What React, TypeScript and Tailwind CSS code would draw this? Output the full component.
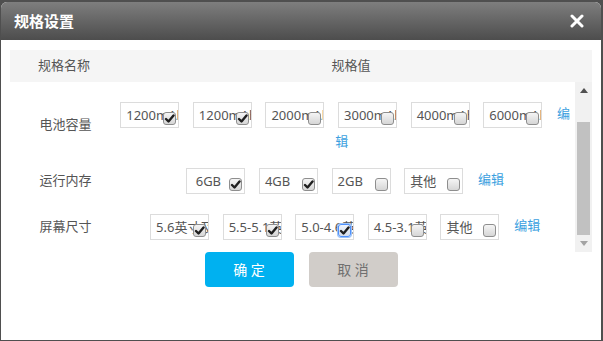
type Item = { text: string; checked: boolean; focused?: boolean };
type Row = { label: string; items: Item[] };

const rows: Row[] = [
  {
    label: "电池容量",
    items: [
      { text: "1200mAh", checked: true },
      { text: "1200mAh", checked: true },
      { text: "2000mAh", checked: false },
      { text: "3000mAh", checked: false },
      { text: "4000mAh", checked: false },
      { text: "6000mAh", checked: false },
    ],
  },
  {
    label: "运行内存",
    items: [
      { text: "\u00a06GB", checked: true },
      { text: "4GB", checked: true },
      { text: "2GB", checked: false },
      { text: "其他", checked: false },
    ],
  },
  {
    label: "屏幕尺寸",
    items: [
      { text: "5.6英寸及以上", checked: true },
      { text: "5.5-5.1英寸", checked: true },
      { text: "5.0-4.6英寸", checked: true, focused: true },
      { text: "4.5-3.1英寸", checked: false },
      { text: "其他", checked: false },
    ],
  },
];

function Checkbox({ checked, focused }: { checked: boolean; focused?: boolean }) {
  return (
    <span
      className={
        focused
          ? "absolute right-[2px] bottom-[2px] flex h-[13px] w-[13px] items-center justify-center rounded-[3px] border border-[#4d90fe] bg-gradient-to-b from-[#eef4fc] to-[#d4dce8] shadow-[0_0_0_1px_#9cc3f5]"
          : "absolute right-[2px] bottom-[2px] flex h-[13px] w-[13px] items-center justify-center rounded-[3px] border border-[#8e8e8e] bg-gradient-to-b from-[#f5f5f5] to-[#d6d6d6]"
      }
    >
      {checked && (
        <svg width="11" height="11" viewBox="0 0 11 11">
          <path d="M2 6 L4.5 8.5 L9.5 2.5" fill="none" stroke="#1f1f1f" strokeWidth="2.4" strokeLinecap="round" strokeLinejoin="round" />
        </svg>
      )}
    </span>
  );
}

export default function App() {
  return (
    <div
      className="h-[341px] w-[603px] overflow-hidden bg-[#4f4f4f] pl-[1px] pt-[2px]"
      style={{ fontFamily: '"Noto Sans", "Noto Sans CJK SC", sans-serif' }}
    >
      <div className="flex h-[338px] w-[600px] flex-col rounded-t-[6px] bg-white">
        {/* Title bar */}
        <div className="flex h-[38px] items-center justify-between rounded-t-[6px] bg-gradient-to-b from-[#7e7e7e] to-[#4d4d4d] pl-[13px] pr-[17px]">
          <span className="text-[15px] font-bold text-white" style={{ fontFamily: '"Noto Sans CJK SC", sans-serif' }}>
            规格设置
          </span>
          <svg width="14" height="14" viewBox="0 0 14 14">
            <path d="M2 2 L12 12 M12 2 L2 12" stroke="#fff" strokeWidth="3" strokeLinecap="round" />
          </svg>
        </div>

        <div className="px-[9px] pt-[10px] text-[13px] text-[#555]">
          {/* Table header */}
          <div className="flex h-[32px] items-center bg-[#f5f5f5]">
            <div className="w-[100px] pl-[28px]">规格名称</div>
            <div className="flex-1 text-center">规格值</div>
          </div>

          {/* Rows with scrollbar */}
          <div className="flex h-[170px]">
            <div className="flex-1 overflow-hidden pt-[10px]">
              {rows.map((row) => (
                <div key={row.label} className="flex items-center py-[7px]">
                  <div className="w-[98.5px] shrink-0 pl-[29.5px]">{row.label}</div>
                  <div className="flex-1 text-center leading-[20px]">
                    {row.items.map((item, i) => (
                      <span
                        key={i}
                        className="relative mx-[6.8px] my-[3px] inline-block h-[26px] w-[59px] overflow-hidden whitespace-nowrap border border-[#dcdcdc] pl-[5px] text-left align-middle leading-[24px]"
                      >
                        {item.text}
                        <Checkbox checked={item.checked} focused={item.focused} />
                      </span>
                    ))}
                    <a className="ml-[8px] cursor-pointer text-[#3b9fe0]">编辑</a>
                  </div>
                </div>
              ))}
            </div>
            {/* Scrollbar */}
            <div className="flex w-[17px] flex-col items-center bg-[#f1f1f1]">
              <div className="flex h-[17px] items-center justify-center">
                <svg width="8" height="5" viewBox="0 0 8 5">
                  <path d="M0 5 L4 0 L8 5 Z" fill="#505050" />
                </svg>
              </div>
              <div className="mt-[23px] h-[113px] w-[13px] bg-[#c1c1c1]" />
              <div className="flex h-[17px] items-center justify-center">
                <svg width="8" height="5" viewBox="0 0 8 5">
                  <path d="M0 0 L8 0 L4 5 Z" fill="#a3a3a3" />
                </svg>
              </div>
            </div>
          </div>
        </div>

        {/* Buttons */}
        <div className="flex justify-center gap-[15px]">
          <button className="h-[35px] w-[89px] rounded-[4px] bg-[#00b1f0] text-[14px] text-white">确 定</button>
          <button className="h-[35px] w-[89px] rounded-[4px] bg-[#d1cdc9] text-[14px] text-[#707070]">取 消</button>
        </div>
      </div>
    </div>
  );
}
